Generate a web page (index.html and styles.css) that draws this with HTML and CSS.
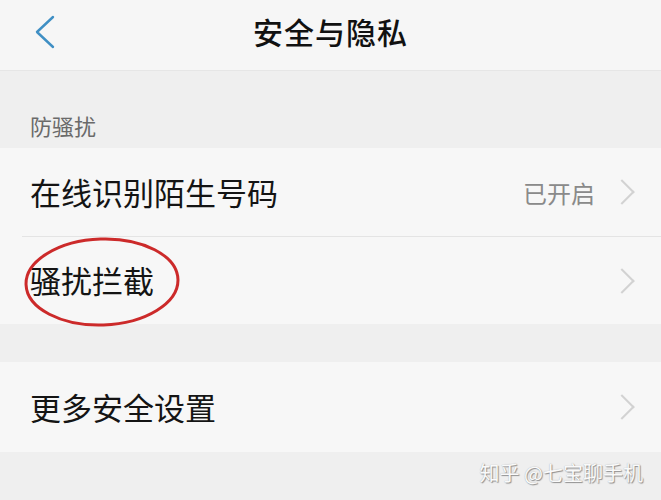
FILE: index.html
```html
<!DOCTYPE html>
<html lang="zh-CN">
<head>
  <meta charset="UTF-8" />
  <meta name="viewport" content="width=device-width, initial-scale=1.0" />
  <title>安全与隐私</title>
  <link rel="stylesheet" href="styles.css">
</head>
<body>
  <header class="topbar">
    <a class="back" href="#">
      <svg width="22" height="34" viewBox="0 0 22 34">
        <polyline points="19,2 3,17 19,32" fill="none" stroke="#3f8fc4" stroke-width="2.4" stroke-linecap="round" stroke-linejoin="round"/>
      </svg>
    </a>
    <h1>安全与隐私</h1>
  </header>

  <section class="group">
    <div class="group-title">防骚扰</div>
    <ul class="list">
      <li class="item">
        <span class="label">在线识别陌生号码</span>
        <span class="value">已开启</span>
        <span class="arrow"></span>
      </li>
      <li class="item marked">
        <span class="label">骚扰拦截</span>
        <span class="arrow"></span>
        <!-- hand-drawn ring over the row -->
        <svg class="ring" width="162" height="94" viewBox="0 0 162 94">
          <ellipse cx="80" cy="46" rx="76" ry="43" fill="none" stroke="#cc2a2a" stroke-width="3" transform="rotate(-2 80 46)"/>
        </svg>
      </li>
    </ul>
  </section>

  <section class="group spaced">
    <ul class="list">
      <li class="item tall">
        <span class="label">更多安全设置</span>
        <span class="arrow"></span>
      </li>
    </ul>
  </section>

  <footer class="foot">
    <span class="watermark">知乎 @七宝聊手机</span>
  </footer>
</body>
</html>
```

FILE: styles.css
```css
* {
  margin: 0;
  padding: 0;
  box-sizing: border-box;
}

body {
  font-family: "Noto Sans CJK SC", "Noto Sans", sans-serif;
  background: #efefef;
  width: 661px;
  height: 500px;
  overflow: hidden;
}

ul {
  list-style: none;
}

.topbar {
  height: 71px;
  background: #f6f6f6;
  border-bottom: 1px solid #e6e6e6;
  display: flex;
  align-items: center;
  justify-content: center;
  position: relative;
}

.back {
  position: absolute;
  left: 34px;
  top: 15px;
  display: block;
}

.topbar h1 {
  font-size: 30px;
  font-weight: 500;
  color: #111;
  letter-spacing: 1px;
  margin-top: -8px;
}

.group-title {
  height: 77px;
  padding: 38px 0 0 30px;
  font-size: 22px;
  color: #6a6a6a;
}

.list {
  background: #f7f7f7;
}

.item {
  height: 88px;
  display: flex;
  align-items: center;
  padding: 0 32px 0 30px;
  position: relative;
}

.item + .item {
  border-top: 1px solid #e4e4e4;
  margin-left: 22px;
  padding-left: 8px;
}

.item.tall {
  height: 90px;
}

.label {
  font-size: 31px;
  color: #141414;
  flex: 1;
  margin-top: -2px;
}

.value {
  font-size: 24px;
  color: #8a8a8a;
  margin-right: 18px;
}

.arrow {
  width: 18px;
  height: 18px;
  border-top: 2px solid #d2d2d2;
  border-right: 2px solid #d2d2d2;
  transform: rotate(45deg);
  margin-right: -2px;
}

.ring {
  position: absolute;
  left: 0;
  top: -1px;
}

.spaced {
  margin-top: 38px;
}

.foot {
  display: flex;
  justify-content: flex-end;
  padding: 6px 18px 0 0;
}

.watermark {
  font-size: 20px;
  color: #fafafa;
  text-shadow: 1px 1px 1px #8f8f8f, 0 0 1px #a5a5a5;
}
```
